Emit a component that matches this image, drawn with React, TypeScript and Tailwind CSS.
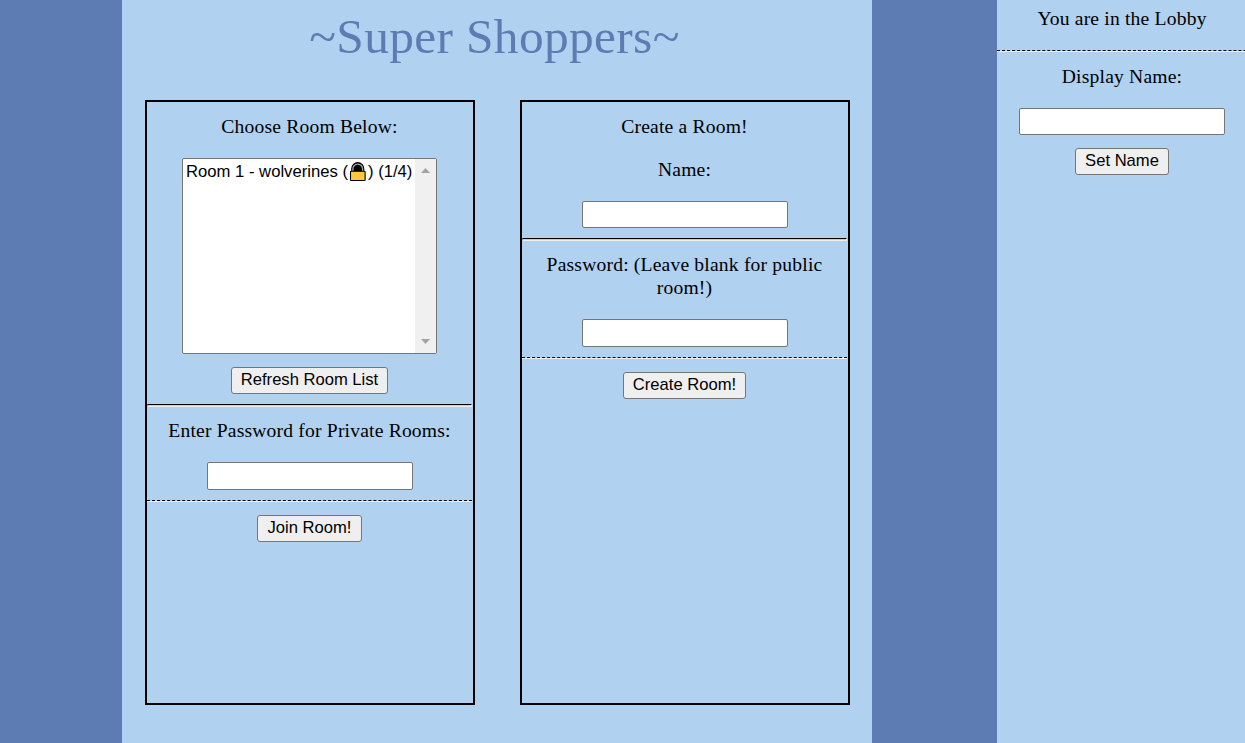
import type { ReactNode } from "react";

function Label({ children, className = "" }: { children: ReactNode; className?: string }) {
  return <p className={`w-full text-center text-[19.6px] leading-[23px] tracking-[0.18px] ${className}`}>{children}</p>;
}

function Field({ label, className = "" }: { label: string; className?: string }) {
  return (
    <input
      aria-label={label}
      className={`w-[206px] shrink-0 rounded-[2px] border border-[#767676] bg-white px-1 outline-none ${className}`}
    />
  );
}

function Button({ children, className = "" }: { children: ReactNode; className?: string }) {
  return (
    <button
      className={`h-[27px] shrink-0 rounded-[3px] border border-[#767676] bg-[#efefef] pb-[2px] text-center font-['Liberation_Sans',Arial,sans-serif] text-[16.6px] leading-[23px] whitespace-nowrap ${className}`}
    >
      {children}
    </button>
  );
}

function SolidRule({ className = "" }: { className?: string }) {
  return (
    <div className={`h-[3px] w-[325px] shrink-0 self-start border-t border-b border-t-black border-b-[#eeeeee] border-l border-l-[#9a9a9a] border-r border-r-[#eeeeee] ${className}`} />
  );
}

function DashedRule({ className = "" }: { className?: string }) {
  return (
    <div className={`h-[2px] w-[325px] shrink-0 self-start border-t border-b border-t-black border-b-[#eeeeee] [border-top-style:dashed] ${className}`} />
  );
}

function Lock() {
  return (
    <svg viewBox="0 0 20 20" className="h-5 w-5 shrink-0">
      <path d="M3.2 10V6.6a6.55 6.55 0 0 1 13.1 0V10Z" fill="#000" />
      <path d="M4.9 9V6.9a4.85 4.85 0 0 1 9.7 0V9" fill="none" stroke="#a8a8a8" strokeWidth="1.3" />
      <rect x="2.5" y="9.3" width="14.6" height="9.2" rx=".6" fill="#ffc83d" stroke="#000" strokeWidth="1.1" />
    </svg>
  );
}

function RoomList() {
  return (
    <div className="mt-[20px] flex h-[196px] w-[255px] shrink-0 overflow-hidden rounded-[2px] border border-[#767676] bg-white">
      <div className="flex h-[25px] min-w-0 flex-1 items-center pl-[3px] font-['Liberation_Sans',Arial,sans-serif] text-[16.667px] whitespace-nowrap">
        <span>Room 1 - wolverines (</span>
        <Lock />
        <span>) (1/4)</span>
      </div>
      <div className="flex w-[21px] shrink-0 flex-col items-center justify-between bg-[#f0f0f0] pt-[9px] pb-[9px]">
        <svg viewBox="0 0 9 5" className="h-[5px] w-[9px]"><path d="M0 5 4.5 0 9 5Z" fill="#a3a3a3" /></svg>
        <svg viewBox="0 0 9 5" className="h-[5px] w-[9px]"><path d="M0 0 4.5 5 9 0Z" fill="#a3a3a3" /></svg>
      </div>
    </div>
  );
}

export default function App() {
  return (
    <div className="flex h-[743px] w-[1245px] overflow-hidden bg-[#5d7cb3] pl-[122px] font-['Liberation_Serif','Times_New_Roman',serif] text-black">
      <main className="w-[750px] shrink-0 bg-[#b0d1f0]">
        <h1 className="h-[100px] pt-[8px] pr-[5px] text-center text-[49.4px] leading-[57px] tracking-[0.35px] text-[#5d7cb3]">~Super Shoppers~</h1>
        <div className="flex gap-[45px] pl-[23px]">
          <section className="flex h-[605px] w-[330px] flex-col items-center border-2 border-black pr-px">
            <Label className="mt-[13px]">Choose Room Below:</Label>
            <RoomList />
            <Button className="mt-[13px] w-[157px]">Refresh Room List</Button>
            <SolidRule className="mt-[10px]" />
            <Label className="mt-[12px]">Enter Password for Private Rooms:</Label>
            <Field label="Room password" className="mt-[20px] h-[28px]" />
            <DashedRule className="mt-[10px]" />
            <Button className="mt-[13px] w-[105px]">Join Room!</Button>
          </section>
          <section className="flex h-[605px] w-[330px] flex-col items-center border-2 border-black pr-px">
            <Label className="mt-[13px]">Create a Room!</Label>
            <Label className="mt-[20px]">Name:</Label>
            <Field label="Room name" className="mt-[20px] h-[27px]" />
            <SolidRule className="mt-[10px]" />
            <Label className="mt-[12px] px-4">Password: (Leave blank for public room!)</Label>
            <Field label="New room password" className="mt-[20px] h-[28px]" />
            <DashedRule className="mt-[10px]" />
            <Button className="mt-[13px] w-[123px]">Create Room!</Button>
          </section>
        </div>
      </main>
      <aside className="ml-[125px] flex w-[248px] shrink-0 flex-col items-center overflow-hidden bg-[#b0d1f0]">
        <Label className="mt-[7px] pl-[2px]">You are in the Lobby</Label>
        <DashedRule className="mt-[20px]" />
        <Label className="mt-[13px] pl-[2px]">Display Name:</Label>
        <Field label="Display name" className="mt-[20px] ml-[2px] h-[27px]" />
        <Button className="mt-[13px] ml-[2px] w-[94px]">Set Name</Button>
      </aside>
    </div>
  );
}
